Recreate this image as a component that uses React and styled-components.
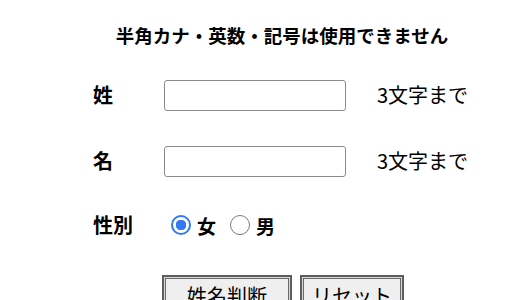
import React, { useState } from 'react';
import styled, { createGlobalStyle } from 'styled-components';

const GlobalStyle = createGlobalStyle`
    body {
        margin: 0;
        background: #fff;
        color: #000;
        font-family: "Noto Sans CJK JP", "Noto Sans", sans-serif;
    }
`;

const Page = styled.div`
    width: 520px;
    height: 300px;
    overflow: hidden;
    padding: 22px 0 0 93px;
    box-sizing: border-box;
`;

const Form = styled.form`
    width: 378px;
    display: flex;
    flex-direction: column;
`;

const Title = styled.h1`
    margin: 0 0 31px;
    font-size: 18.5px;
    line-height: 27px;
    font-weight: bold;
    text-align: center;
    white-space: nowrap;
`;

const Row = styled.div`
    display: grid;
    grid-template-columns: 71px 182px auto;
    align-items: center;
    height: 31px;
    margin-bottom: ${props => props.$gap || 35}px;
`;

const Label = styled.label`
    font-size: 20px;
    font-weight: bold;
    line-height: 31px;
    margin-top: -3px;
`;

const TextInput = styled.input`
    width: 182px;
    height: 31px;
    box-sizing: border-box;
    border: 1px solid #8a8a8a;
    border-radius: 3px;
    padding: 2px 6px;
    font-size: 16px;
    font-family: inherit;
    outline: none;
`;

const Note = styled.span`
    padding-left: 31px;
    font-size: 20px;
    line-height: 31px;
    white-space: nowrap;
    margin-top: -2px;
`;

const RadioGroup = styled.div`
    display: flex;
    align-items: center;
    padding-left: 7px;
`;

const RadioLabel = styled.label`
    display: flex;
    align-items: center;
    gap: 6px;
    font-size: 19px;
    font-weight: bold;
    margin-right: 14px;
    cursor: pointer;
`;

const Radio = styled.input`
    appearance: none;
    margin: 0 0 2px;
    width: 20px;
    height: 20px;
    border-radius: 50%;
    box-sizing: border-box;
    border: 1.5px solid #7a7a7a;
    background: #fff;
    &:checked {
        border: 2px solid #3478f6;
        background: radial-gradient(circle, #3478f6 0 5px, #fff 5.5px);
    }
`;

const Buttons = styled.div`
    display: flex;
    justify-content: center;
    gap: 8px;
    margin-top: 1px;
    padding-left: 2px;
`;

const Button = styled.button`
    width: ${props => props.$width}px;
    height: 40px;
    box-sizing: border-box;
    border: 2px solid #5e5e5e;
    box-shadow: inset 0 0 0 1px #d8d8d8, inset 0 0 0 2px #6a6a6a;
    background: #efefef;
    font-family: inherit;
    font-size: 20px;
    line-height: 26px;
    padding: 6px 0 0;
    display: flex;
    justify-content: center;
    align-items: flex-start;
    color: #000;
    border-radius: 0;
`;

export default function App() {
    const [gender, setGender] = useState('female');

    return (
        <>
            <GlobalStyle />
            <Page>
                <Form onSubmit={e => e.preventDefault()}>
                    <Title>半角カナ・英数・記号は使用できません</Title>
                    <Row>
                        <Label>姓</Label>
                        <TextInput type="text" />
                        <Note>3文字まで</Note>
                    </Row>
                    <Row $gap={33}>
                        <Label>名</Label>
                        <TextInput type="text" />
                        <Note>3文字まで</Note>
                    </Row>
                    <Row $gap={33}>
                        <Label>性別</Label>
                        <RadioGroup>
                            <RadioLabel>
                                <Radio type="radio" name="gender" checked={gender === 'female'} onChange={() => setGender('female')} />
                                女
                            </RadioLabel>
                            <RadioLabel>
                                <Radio type="radio" name="gender" checked={gender === 'male'} onChange={() => setGender('male')} />
                                男
                            </RadioLabel>
                        </RadioGroup>
                    </Row>
                    <Buttons>
                        <Button type="submit" $width={130}>姓名判断</Button>
                        <Button type="reset" $width={104}>リセット</Button>
                    </Buttons>
                </Form>
            </Page>
        </>
    );
}
